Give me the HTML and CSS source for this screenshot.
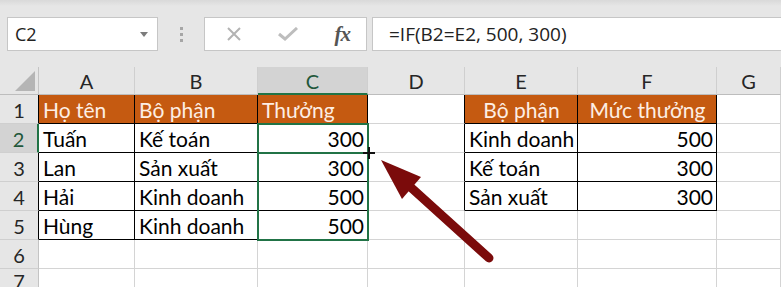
FILE: index.html
```html
<!DOCTYPE html>
<html lang="vi">
<head>
  <meta charset="UTF-8">
  <title>Excel - IF</title>
  <link rel="stylesheet" href="styles.css">
</head>
<body>
  <div class="ribbon-edge"></div>

  <div class="fbar">
    <div class="namebox">
      <span>C2</span>
      <svg class="caret" width="8" height="5" viewBox="0 0 8 5"><path d="M0 0H8L4 5Z" fill="#7c7c7c"/></svg>
    </div>
    <div class="grip"><i></i><i></i><i></i></div>
    <div class="fxbox">
      <svg width="16" height="16" viewBox="0 0 16 16"><path d="M2 2L14 14M14 2L2 14" stroke="#b3b3b3" stroke-width="2" fill="none"/></svg>
      <svg width="20" height="14" viewBox="0 0 20 14"><path d="M1 7L7 12L19 1" stroke="#bdbdbd" stroke-width="3" fill="none"/></svg>
      <span class="fx">fx</span>
    </div>
    <div class="formula">=IF(B2=E2, 500, 300)</div>
  </div>

  <div class="sheet">
    <div class="corner">
      <svg width="20" height="20" viewBox="0 0 20 20"><path d="M20 0V20H0Z" fill="#b5b5b5"/></svg>
    </div>
    <div class="colhead">A</div>
    <div class="colhead">B</div>
    <div class="colhead on">C</div>
    <div class="colhead">D</div>
    <div class="colhead">E</div>
    <div class="colhead">F</div>
    <div class="colhead">G</div>

    <div class="rowhead edge">1</div>
    <div class="cell bk hd">Họ tên</div>
    <div class="cell bk hd">Bộ phận</div>
    <div class="cell bk hd">Thưởng</div>
    <div class="cell edge"></div>
    <div class="cell bk hd center">Bộ phận</div>
    <div class="cell bk hd center">Mức thưởng</div>
    <div class="cell"></div>

    <div class="rowhead on">2</div>
    <div class="cell bk">Tuấn</div>
    <div class="cell bk">Kế toán</div>
    <div class="cell bk num sel-anchor">
      300
      <!-- selection C2:C5 and active cell C2 -->
      <div class="sel range"></div>
      <div class="sel active"><span class="handle"></span></div>
    </div>
    <div class="cell edge"></div>
    <div class="cell bk">Kinh doanh</div>
    <div class="cell bk num">500</div>
    <div class="cell"></div>

    <div class="rowhead edge">3</div>
    <div class="cell bk">Lan</div>
    <div class="cell bk">Sản xuất</div>
    <div class="cell bk num">300</div>
    <div class="cell edge"></div>
    <div class="cell bk">Kế toán</div>
    <div class="cell bk num">300</div>
    <div class="cell"></div>

    <div class="rowhead edge">4</div>
    <div class="cell bk">Hải</div>
    <div class="cell bk">Kinh doanh</div>
    <div class="cell bk num">500</div>
    <div class="cell edge"></div>
    <div class="cell bk">Sản xuất</div>
    <div class="cell bk num">300</div>
    <div class="cell"></div>

    <div class="rowhead edge">5</div>
    <div class="cell bk">Hùng</div>
    <div class="cell bk">Kinh doanh</div>
    <div class="cell bk num">500</div>
    <div class="cell"></div>
    <div class="cell"></div>
    <div class="cell"></div>
    <div class="cell"></div>

    <div class="rowhead">6</div>
    <div class="cell"></div>
    <div class="cell"></div>
    <div class="cell"></div>
    <div class="cell"></div>
    <div class="cell"></div>
    <div class="cell"></div>
    <div class="cell"></div>

    <div class="rowhead">7</div>
    <div class="cell"></div>
    <div class="cell"></div>
    <div class="cell"></div>
    <div class="cell"></div>
    <div class="cell"></div>
    <div class="cell"></div>
    <div class="cell"></div>
  </div>

  <svg class="arrow" width="781" height="287" viewBox="0 0 781 287">
    <line x1="489" y1="258" x2="406" y2="183" stroke="#7b0b0b" stroke-width="9" stroke-linecap="round"/>
    <path d="M381 160L421 177L402 199Z" fill="#7b0b0b"/>
  </svg>
</body>
</html>
```

FILE: styles.css
```css
body {
  margin: 0;
  background: #e6e6e6;
  font-family: Lato, "Open Sans", sans-serif;
  overflow: hidden;
  height: 287px;
}

.ribbon-edge {
  height: 17px;
  background: linear-gradient(#d9d9d9, #e6e6e6 6px);
}

/* formula bar */
.fbar {
  display: flex;
  height: 34px;
  padding-left: 7px;
}
.namebox, .fxbox, .formula {
  box-sizing: border-box;
  background: #fff;
  border: 1px solid #c6c6c6;
  display: flex;
  align-items: center;
}
.namebox {
  width: 151px;
  padding: 0 9px 0 7px;
  justify-content: space-between;
  font-family: "Open Sans", sans-serif;
  font-size: 18px;
  color: #222;
}
.caret { margin-top: 1px; }
.grip {
  width: 46px;
  display: flex;
  flex-direction: column;
  align-items: center;
  justify-content: center;
  gap: 3px;
}
.grip i {
  width: 3px;
  height: 3px;
  background: #a6a6a6;
}
.fxbox {
  width: 163px;
  padding: 0 16px 0 21px;
  justify-content: space-between;
}
.fx {
  font-family: "Liberation Serif", serif;
  font-style: italic;
  font-weight: bold;
  font-size: 21px;
  color: #555;
  letter-spacing: -1px;
}
.formula {
  flex: 1;
  margin-left: 5px;
  border-right: none;
  padding-left: 16px;
  font-family: "Open Sans", sans-serif;
  font-size: 19px;
  color: #222;
}

/* grid */
.sheet {
  margin-top: 16px;
  display: grid;
  grid-template-columns: 39px 96px 123px 110px 97px 113px 139px 64px;
  grid-template-rows: 28px repeat(6, 29px);
  background: #fff;
}
.corner, .colhead, .rowhead {
  box-sizing: border-box;
  background: #e6e6e6;
  color: #262626;
  font-size: 20px;
  display: flex;
  justify-content: center;
}
.corner {
  border-right: 1px solid #c4c4c4;
  border-bottom: 1px solid #bdbdbd;
  align-items: flex-end;
  justify-content: flex-end;
  padding: 0 3px 3px 0;
}
.colhead {
  align-items: flex-end;
  padding-bottom: 1px;
  border-right: 1px solid #cfcfcf;
  border-bottom: 1px solid #bdbdbd;
}
.colhead.on {
  background: #d3d3d3;
  color: #22573a;
  border-bottom: 2px solid #217346;
  padding-bottom: 0;
}
.rowhead {
  align-items: flex-end;
  padding-bottom: 1px;
  border-right: 1px solid #c4c4c4;
  border-bottom: 1px solid #cfcfcf;
}
.rowhead.edge { border-right-color: #000; }
.rowhead.on {
  background: #d3d3d3;
  color: #22573a;
  border-right: 2px solid #217346;
}

.cell {
  box-sizing: border-box;
  border-right: 1px solid #d4d4d4;
  border-bottom: 1px solid #d4d4d4;
  font-size: 21px;
  color: #000;
  padding: 0 3px 1px 4px;
  display: flex;
  align-items: flex-end;
  white-space: nowrap;
}
.cell.edge { border-right-color: #000; }
.cell.bk {
  border-right-color: #000;
  border-bottom-color: #000;
}
.cell.hd {
  background: #c55a11;
  color: #fdeee4;
}
.cell.center { justify-content: center; }
.cell.num { justify-content: flex-end; }

.sel-anchor { position: relative; }
.sel {
  position: absolute;
  left: -1px;
  top: -1px;
  width: 112px;
  border: 2px solid #217346;
  box-sizing: border-box;
  z-index: 2;
}
.range { height: 118px; }
.active { height: 31px; }

/* crosshair cursor from the fill drag */
.handle {
  position: absolute;
  right: -8px;
  bottom: -7px;
  width: 12px;
  height: 12px;
  background:
    linear-gradient(#111, #111) center / 12px 2px no-repeat,
    linear-gradient(#111, #111) center / 2px 12px no-repeat;
}

.arrow {
  position: absolute;
  left: 0;
  top: 0;
  pointer-events: none;
}
```
